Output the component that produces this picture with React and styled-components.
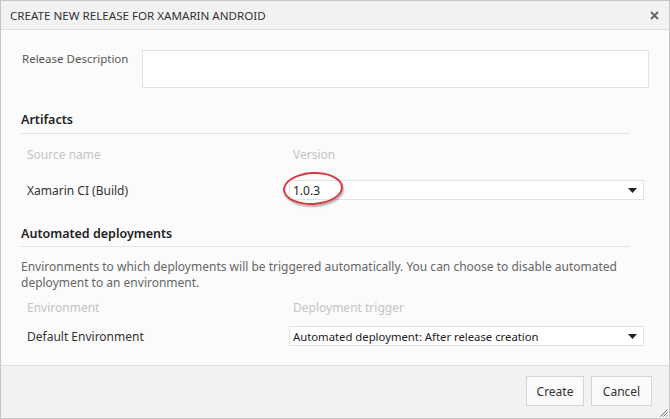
import styled, { createGlobalStyle } from "styled-components";

const GlobalStyle = createGlobalStyle`
  html, body {
    margin: 0;
    padding: 0;
    background: #ffffff;
  }
  body {
    font-family: "Segoe UI", "Noto Sans", "Liberation Sans", sans-serif;
    color: #333;
  }
  * {
    box-sizing: border-box;
  }
`;

function Caret() {
  return (
    <svg width="9" height="5" viewBox="0 0 9 5">
      <path d="M0 0 H9 L4.5 5 Z" fill="#222" />
    </svg>
  );
}

function App() {
  return (
    <>
      <GlobalStyle />
      <Dialog>
        <TitleBar>
          <Title>CREATE NEW RELEASE FOR XAMARIN ANDROID</Title>
          <Close>
            <svg width="9" height="9" viewBox="0 0 9 9">
              <path d="M1 1 L8 8 M8 1 L1 8" stroke="#666" strokeWidth="2" />
            </svg>
          </Close>
        </TitleBar>

        <Body>
          <DescRow>
            <FieldLabel>Release Description</FieldLabel>
            <TextBox />
          </DescRow>

          <SectionHeader $top="23px">Artifacts</SectionHeader>
          <Grid $top="10px">
            <ColHead>Source name</ColHead>
            <ColHead $shift>Version</ColHead>
          </Grid>
          <Grid $top="16px">
            <RowLabel>Xamarin CI (Build)</RowLabel>
            <SelectWrap>
              <Select>
                <span>1.0.3</span>
                <Caret />
              </Select>
              <Highlight />
            </SelectWrap>
          </Grid>

          <SectionHeader $top="25px" $pad="4px">Automated deployments</SectionHeader>
          <Note>
            Environments to which deployments will be triggered automatically. You can choose to disable automated
            deployment to an environment.
          </Note>
          <Grid $top="6px">
            <ColHead>Environment</ColHead>
            <ColHead $shift>Deployment trigger</ColHead>
          </Grid>
          <Grid $top="9px">
            <RowLabel>Default Environment</RowLabel>
            <Select>
              <SelectText>Automated deployment: After release creation</SelectText>
              <Caret />
            </Select>
          </Grid>
        </Body>

        <Footer>
          <Button $w="58px">Create</Button>
          <Button $w="61px">Cancel</Button>
          <Grip>
            <svg width="9" height="9" viewBox="0 0 9 9">
              <path d="M8.5 1.5 L1.5 8.5 M8.5 4.5 L4.5 8.5 M8.5 7.5 L7.5 8.5" stroke="#666" strokeWidth="1" />
            </svg>
          </Grip>
        </Footer>
      </Dialog>
    </>
  );
}

export default App;

const Dialog = styled.div`
  width: 670px;
  height: 419px;
  border: 1px solid #c6c6c6;
  display: flex;
  flex-direction: column;
  background: #fbfbfb;
`;

const TitleBar = styled.div`
  height: 29px;
  flex: none;
  display: flex;
  align-items: center;
  justify-content: space-between;
  padding: 0 10px 0 9px;
  background: #f2f2f2;
  border-bottom: 1px solid #dedede;
`;

const Title = styled.div`
  font-size: 11.6px;
  color: #333;
`;

const Close = styled.div`
  display: flex;
  align-items: center;
`;

const Body = styled.div`
  flex: 1;
  padding: 20px 26px 0 20px;
`;

const DescRow = styled.div`
  display: grid;
  grid-template-columns: 120px 1fr;
  padding-left: 1px;
  margin-right: -6px;
`;

const FieldLabel = styled.div`
  font-size: 11.5px;
  color: #555;
  padding-top: 1px;
`;

const TextBox = styled.div`
  height: 38px;
  border: 1px solid #e3e3e3;
  background: #fff;
`;

const SectionHeader = styled.div`
  margin-top: ${(p) => p.$top || "24px"};
  margin-right: 13px;
  font-size: 12.5px;
  font-weight: 600;
  color: #222;
  padding-bottom: ${(p) => p.$pad || "5px"};
  border-bottom: 1px solid #e3e3e3;
`;

const Grid = styled.div`
  display: grid;
  grid-template-columns: 262px 355px;
  align-items: center;
  padding-left: 6px;
  margin-top: ${(p) => p.$top || "10px"};
  min-height: 20px;
`;

const ColHead = styled.div`
  font-size: 12px;
  color: #c4c4c4;
  padding-left: ${(p) => (p.$shift ? "4px" : "0")};
`;

const RowLabel = styled.div`
  font-size: 12px;
  color: #333;
`;

const SelectWrap = styled.div`
  position: relative;
`;

const Select = styled.div`
  height: 20px;
  border: 1px solid #e3e3e3;
  background: #fff;
  display: flex;
  align-items: center;
  justify-content: space-between;
  padding: 0 6px 0 3px;
  font-size: 12px;
  color: #222;
`;

const SelectText = styled.span`
  font-size: 11.3px;
`;

const Highlight = styled.div`
  position: absolute;
  left: -6px;
  top: -8px;
  width: 60px;
  height: 33px;
  border: 2px solid #d9363e;
  border-radius: 50%;
  transform: rotate(-3deg);
  box-shadow: 1px 2px 2px rgba(0, 0, 0, 0.3);
  pointer-events: none;
`;

const Note = styled.p`
  margin: 12px 0 0;
  font-size: 12px;
  line-height: 16px;
  color: #666;
  max-width: 600px;
`;

const Footer = styled.div`
  position: relative;
  height: 53px;
  flex: none;
  display: flex;
  justify-content: flex-end;
  align-items: flex-start;
  gap: 7px;
  padding: 10px 17px 0 0;
  background: #f2f2f2;
  border-top: 1px solid #dedede;
`;

const Button = styled.button`
  width: ${(p) => p.$w};
  height: 30px;
  padding: 0;
  border: 1px solid #d6d6d6;
  background: #fafafa;
  font-family: inherit;
  font-size: 12px;
  color: #333;
`;

const Grip = styled.div`
  position: absolute;
  right: 1px;
  bottom: 1px;
  display: flex;
`;
